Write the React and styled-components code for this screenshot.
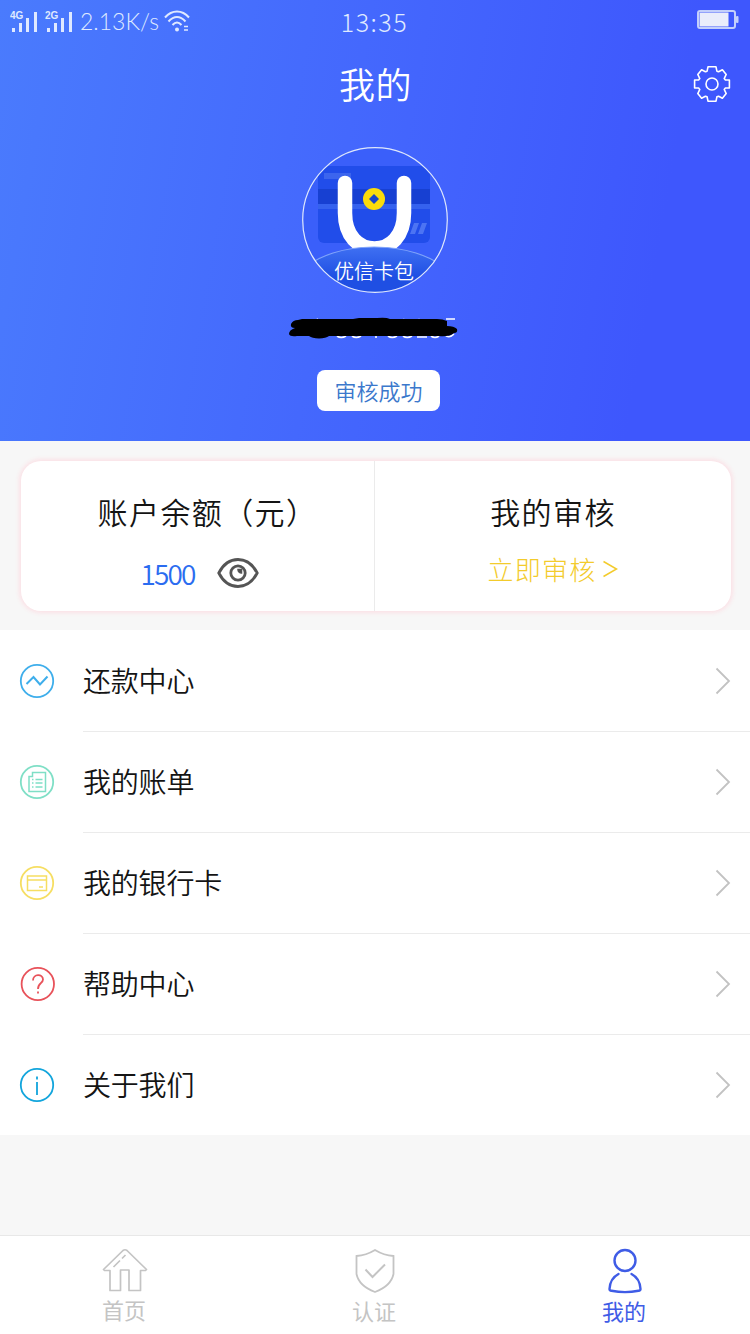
import styled, { createGlobalStyle } from "styled-components";

const palette = {
  primary: "#3f5ce6",
  text: "#141414",
  gray: "#c4c4c4",
  line: "#ebebeb",
  bg: "#f7f7f7",
  yellow: "#f3cb2c",
};

const GlobalStyle = createGlobalStyle`
  * {
    box-sizing: border-box;
  }
  body {
    margin: 0;
    background: ${palette.bg};
    color: ${palette.text};
    font-family: "Noto Sans CJK SC", sans-serif;
    font-weight: 350;
  }
  svg {
    display: block;
    flex: none;
  }
`;

const Page = styled.div`
  display: flex;
  flex-direction: column;
  width: 750px;
  height: 1334px;
  overflow: hidden;
`;

const Header = styled.header`
  display: flex;
  flex-direction: column;
  align-items: center;
  height: 441px;
  color: #fff;
  background: linear-gradient(100deg, #4a7bfd 0%, #4468fd 45%, #3e57fd 85%);
`;

const StatusBar = styled.div`
  display: grid;
  grid-template-columns: 1fr auto 1fr;
  align-items: center;
  width: 100%;
  height: 44px;
  padding: 0 11px 0 10px;
  color: #dfe9ff;
`;

const StatusLeft = styled.div`
  display: flex;
  align-items: center;
  height: 36px;
  padding-bottom: 2px;
`;

const Speed = styled.span`
  margin: 0 5px 0 0;
  font-family: Lato, sans-serif;
  font-size: 23px;
  line-height: 36px;
`;

const Time = styled.span`
  font-size: 25px;
  font-weight: 300;
  line-height: 38px;
  letter-spacing: 1.5px;
  padding-bottom: 2px;
`;

const Battery = styled.div`
  justify-self: end;
  padding-bottom: 5px;
`;

const TitleBar = styled.div`
  display: grid;
  grid-template-columns: 1fr auto 1fr;
  align-items: center;
  width: 100%;
  height: 80px;
  padding: 0 19px;

  h1 {
    grid-column: 2;
    margin: 0 0 2px 1px;
    font-size: 36px;
    font-weight: 350;
    line-height: 76px;
    letter-spacing: 0.5px;
  }
  svg {
    justify-self: end;
  }
`;

const LogoWrapper = styled.div`
  margin-top: 23px;
`;

const PhoneWrapper = styled.div`
  margin: 24px 3px 0 0;
`;

const Badge = styled.div`
  width: 123px;
  height: 41px;
  margin: 25px 0 0 7px;
  border-radius: 8px;
  background: #fff;
  color: #3b78cc;
  font-size: 22px;
  line-height: 40px;
  text-align: center;
`;

const CardSection = styled.section`
  height: 189px;
  padding: 20px 19px 19px 21px;
`;

const Card = styled.div`
  display: flex;
  height: 150px;
  border-radius: 20px;
  background: #fff;
  box-shadow: 0 0 4px 2px #fbe1e6;
`;

const CardItem = styled.div`
  display: flex;
  flex-direction: column;
  align-items: center;
  width: ${({ $width }) => $width}px;
  padding-top: 28px;
  border-right: ${({ $divided }) => ($divided ? `1px solid ${palette.line}` : "none")};

  h2 {
    margin: 0;
    padding-left: ${({ $indent }) => $indent || 0}px;
    font-size: 30px;
    font-weight: 350;
    line-height: 44px;
    letter-spacing: 1.4px;
    white-space: nowrap;
  }
`;

const Balance = styled.div`
  display: flex;
  align-items: center;
  gap: 23px;
  margin: 18px 0 0 5px;
  line-height: 44px;
  color: #2b6cf0;

  span {
    font-family: "Liberation Sans Narrow", "Noto Sans CJK SC", sans-serif;
    font-size: 28px;
    letter-spacing: -1.9px;
  }
`;

const AuditLink = styled.a`
  display: flex;
  align-items: center;
  gap: 7px;
  margin-top: 15px;
  color: ${palette.yellow};
  font-size: 26px;
  font-weight: 300;
  line-height: 42px;
  letter-spacing: 1.2px;
`;

const Menu = styled.ul`
  margin: 0;
  padding: 1px 0 0;
  height: 505px;
  background: #fff;
  list-style: none;
`;

const MenuItem = styled.li`
  display: flex;
  align-items: center;
  height: 101px;
  padding-left: 19px;

  > svg {
    margin-bottom: 1px;
  }
`;

const MenuContent = styled.div`
  display: flex;
  align-items: center;
  justify-content: space-between;
  flex: 1;
  height: 101px;
  margin-left: 28px;
  padding-right: 19px;
  border-bottom: 1px solid ${palette.line};
  font-size: 28px;
  letter-spacing: -0.2px;

  ${MenuItem}:last-child & {
    border-bottom-color: transparent;
  }
  span {
    padding-bottom: 2px;
  }
`;

const TabBar = styled.nav`
  display: grid;
  grid-template-columns: repeat(3, 1fr);
  height: 99px;
  margin-top: auto;
  border-top: 1px solid #e8e8e8;
  background: #fff;
`;

const Tab = styled.div`
  display: flex;
  flex-direction: column;
  align-items: center;
  padding-top: 12px;
  color: ${({ $active }) => ($active ? palette.primary : palette.gray)};
  font-size: 22px;
  font-weight: 400;
  line-height: ${({ $lineHeight }) => $lineHeight || 33}px;

  span {
    margin-right: 2px;
  }
`;

const Signal = ({ label }) => (
  <svg width="35" height="24" viewBox="0 0 35 24" fill="currentColor">
    <text x="0" y="9.500" fontSize="10" fontWeight="700" fontFamily="Liberation Sans, sans-serif">
      {label}
    </text>
    <rect x="2" y="19" width="3" height="4" />
    <rect x="9" y="14" width="3" height="9" />
    <rect x="16" y="9" width="3" height="14" />
    <rect x="24" y="3" width="3" height="20" />
  </svg>
);

const WifiIcon = () => (
  <svg width="27" height="24" viewBox="0 0 27 24" fill="none" stroke="currentColor" strokeWidth="2">
    <path d="M1 8.500C8 0.500 18 0.500 25 8.500" />
    <path d="M4.500 12.500C10 6.500 16 6.500 21.500 12.500" />
    <path d="M8.500 16C11.500 12.500 14.500 12.500 17.500 16" />
    <circle cx="13" cy="20.500" r="2" fill="currentColor" stroke="none" />
    <path d="M20 17.500h4M20 21h4" strokeWidth="1.600" />
  </svg>
);

const BatteryIcon = () => (
  <svg width="42" height="19" viewBox="0 0 42 19">
    <rect x="1" y="1" width="37" height="17" rx="2" fill="none" stroke="#c3cffb" strokeWidth="2" />
    <rect x="2.500" y="2.500" width="29" height="14" fill="#eaedfb" />
    <rect x="39" y="6" width="2.500" height="7" rx="1" fill="#c3cffb" />
  </svg>
);

const GearIcon = () => (
  <svg width="38" height="38" viewBox="-19 -19 38 38" fill="none" stroke="#fff" strokeWidth="1.600" strokeLinejoin="round">
    <path d="M-4 -17.200H4L4.900 -12.800L6.600 -12.200L10.400 -14.200L14.200 -9.600L12.200 -5.400L13.400 -4H17.400V4H13.400L12.200 5.400L14.200 9.600L10.400 14.200L6.600 12.200L4.900 12.800L4 17.200H-4L-4.900 12.800L-6.600 12.200L-10.400 14.200L-14.200 9.600L-12.200 5.400L-13.400 4H-17.400V-4H-13.400L-12.200 -5.400L-14.200 -9.600L-10.400 -14.200L-6.600 -12.200L-4.900 -12.800Z" />
    <circle r="6" />
  </svg>
);

const Logo = () => (
  <svg width="146" height="146" viewBox="0 0 146 146">
    <defs>
      <clipPath id="logo-circle">
        <circle cx="73" cy="73" r="72" />
      </clipPath>
      <linearGradient id="logo-base" x1="0" y1="0" x2="0" y2="1">
        <stop offset="0" stopColor="#3f70f2" />
        <stop offset="0.600" stopColor="#1f4fe3" />
      </linearGradient>
    </defs>
    <g clipPath="url(#logo-circle)">
      <circle cx="73" cy="73" r="72" fill="#3a5ffa" />
      <rect x="16" y="19" width="112" height="77" rx="6" fill="#214dea" />
      <rect x="16" y="42" width="112" height="15" fill="#1740d2" />
      <rect x="16" y="57" width="112" height="5" fill="#3562ee" />
      <rect x="22" y="26" width="27" height="6" fill="#3c65ee" />
      <path d="M112 76h5l-4 11h-5zM120 76h5l-4 11h-5z" fill="#4c74f3" />
      <path d="M42.500 36V66C42.500 89 56 101.500 72 101.500S101.500 89 101.500 66V36" transform="translate(0.500 0)" fill="none" stroke="#fff" strokeWidth="14.500" strokeLinecap="round" />
      <path d="M0 124C30 92 114 92 146 124V150H0Z" fill="url(#logo-base)" />
      <path d="M0 124C30 92 114 92 146 124" fill="none" stroke="#7fa3fa" strokeWidth="1.200" />
      <circle cx="72" cy="52" r="11" fill="#fbdc0b" />
      <path d="M72 47L77 52L72 57L67 52Z" fill="#1a45c8" />
    </g>
    <circle cx="73" cy="73" r="72.300" fill="none" stroke="#dfe8fb" strokeWidth="1.200" />
    <text x="72" y="132" fontSize="20" fontWeight="350" fill="#fff" textAnchor="middle">
      优信卡包
    </text>
  </svg>
);

// phone number stays covered by a marker stroke
const MaskedPhone = () => (
  <svg width="170" height="28" viewBox="0 0 170 28">
    <g fill="none" stroke="#fff" strokeWidth="1.600">
      <path d="M48 19q4 3 9 0M63 19q4 3 9 0M87 18v3M99 19q4 3 9 0M114 19q4 3 9 0M128 20h10M142 19q4 3 8 0M156 18q4 4 9 -1" />
      <path d="M26 4l3-2M110 4q5-3 9 0M126 4q4-3 8 0M157 2h9" />
    </g>
    <path
      d="M9 3Q4 3 2 7Q1 11 6 11Q0 13 0 17Q1 20 8 19H20Q23 21 30 21.500Q37 21 40 19H150Q160 20 165 16Q169 16 168 12Q165 9 158 9V4Q154 2 148 2H101Q97 0 88 1H70L64 2H13Z"
      fill="#000"
    />
  </svg>
);

const EyeIcon = () => (
  <svg width="42" height="32" viewBox="0 0 42 32" fill="none" stroke="#555" strokeWidth="2.800">
    <path d="M1.800 16C11 -2 31 -2 40.200 16C31 34 11 34 1.800 16Z" />
    <circle cx="21" cy="16" r="7.200" strokeWidth="2.800" />
    <path d="M21 12.500A3.500 3.500 0 0 0 24.500 16V12.500Z" fill="#4c4c4c" strokeWidth="1.500" />
  </svg>
);

const SmallArrow = () => (
  <svg width="15" height="18" viewBox="0 0 15 18" fill="none" stroke="currentColor" strokeWidth="1.500">
    <path d="M0.500 1.500L13.500 9L0.500 16.500" />
  </svg>
);

const ArrowIcon = () => (
  <svg width="16" height="28" viewBox="0 0 16 28" fill="none" stroke="#c2c2c2" strokeWidth="1.800">
    <path d="M1.500 1.500L14 14L1.500 26.500" />
  </svg>
);

const CircleIcon = ({ color, children, cx = 18 }) => (
  <svg width="36" height="36" viewBox="0 0 36 36" fill="none" stroke={color} strokeWidth="1.800">
    <circle cx={cx} cy="18" r="16.200" />
    {children}
  </svg>
);

const menus = [
  {
    name: "还款中心",
    icon: (
      <CircleIcon color="#3eaeeb">
        <path d="M7.500 21L14.500 14L21 21.500L28.500 13.500" strokeWidth="2" />
      </CircleIcon>
    ),
  },
  {
    name: "我的账单",
    icon: (
      <CircleIcon color="#7fdfc6">
        <path d="M13.500 8.500H26.500V27.500H10V12.500H13.500Z" strokeWidth="1.500" />
        <path d="M13 15.500h1.500M13 19h1.500M13 23h1.500M16.500 15.500H23.500M16.500 19H23.500M16.500 23H23.500" strokeWidth="1.300" />
      </CircleIcon>
    ),
  },
  {
    name: "我的银行卡",
    icon: (
      <CircleIcon color="#f6de62">
        <rect x="8.500" y="11" width="19" height="14.500" strokeWidth="1.500" />
        <path d="M8.500 15H27.500M20 22H24" strokeWidth="1.400" />
      </CircleIcon>
    ),
  },
  {
    name: "帮助中心",
    icon: (
      <CircleIcon color="#e8525a" cx={18.8}>
        <path d="M14 14.500C14 7.500 24 7.500 24 13.500C24 17.500 19 16.500 19 23" />
        <path d="M19 25.500V27.500" />
      </CircleIcon>
    ),
  },
  {
    name: "关于我们",
    icon: (
      <CircleIcon color="#12a5dc">
        <path d="M18 9.500V12.500M18 15V28" />
      </CircleIcon>
    ),
  },
];

const HomeIcon = () => (
  <svg width="46" height="46" viewBox="0 0 46 46" fill="none" stroke="currentColor" strokeWidth="1.700" strokeLinejoin="round">
    <path d="M21 2.500Q23 1 25 2.500L44.500 21.500L43.500 22.500H38.500V42.500H27V22H18.500V42.500H8V22.500H2.500L1.500 21.500Z" />
    <path d="M11.500 19L18 12.500M20 10.500L23.500 7" />
  </svg>
);

const ShieldIcon = () => (
  <svg width="46" height="46" viewBox="0 0 46 46" fill="none" stroke="currentColor" strokeWidth="1.800">
    <path d="M23 2Q32 7.500 41.500 8V26Q39 38 23 44Q7 38 4.500 26V8Q14 7.500 23 2Z" />
    <path d="M13.500 21.500L20.500 29L33 16.500" strokeWidth="2" />
  </svg>
);

const UserIcon = () => (
  <svg width="46" height="46" viewBox="0 0 46 46" fill="none" stroke="currentColor" strokeWidth="2.400" strokeLinecap="round">
    <circle cx="23" cy="12.500" r="10.500" />
    <path d="M16.500 26Q8 30.500 7.500 41Q7.500 42.500 9.500 42.800Q23 45.500 36.500 42.800Q38.500 42.500 38.500 41Q38 30.500 29.500 26" />
  </svg>
);

const App = () => {
  return (
    <Page>
      <GlobalStyle />
      <Header>
        <StatusBar>
          <StatusLeft>
            <Signal label="4G" />
            <Signal label="2G" />
            <Speed>2.13K/s</Speed>
            <WifiIcon />
          </StatusLeft>
          <Time>13:35</Time>
          <Battery>
            <BatteryIcon />
          </Battery>
        </StatusBar>
        <TitleBar>
          <h1>我的</h1>
          <GearIcon />
        </TitleBar>
        <LogoWrapper>
          <Logo />
        </LogoWrapper>
        <PhoneWrapper>
          <MaskedPhone />
        </PhoneWrapper>
        <Badge>审核成功</Badge>
      </Header>
      <CardSection>
        <Card>
          <CardItem $width={354} $indent={20} $divided>
            <h2>账户余额（元）</h2>
            <Balance>
              <span>1500</span>
              <EyeIcon />
            </Balance>
          </CardItem>
          <CardItem $width={356}>
            <h2>我的审核</h2>
            <AuditLink>
              立即审核
              <SmallArrow />
            </AuditLink>
          </CardItem>
        </Card>
      </CardSection>
      <Menu>
        {menus.map(({ name, icon }) => (
          <MenuItem key={name}>
            {icon}
            <MenuContent>
              <span>{name}</span>
              <ArrowIcon />
            </MenuContent>
          </MenuItem>
        ))}
      </Menu>
      <TabBar>
        <Tab $lineHeight={31}>
          <HomeIcon />
          <span>首页</span>
        </Tab>
        <Tab>
          <ShieldIcon />
          <span>认证</span>
        </Tab>
        <Tab $active>
          <UserIcon />
          <span>我的</span>
        </Tab>
      </TabBar>
    </Page>
  );
};

export default App;
